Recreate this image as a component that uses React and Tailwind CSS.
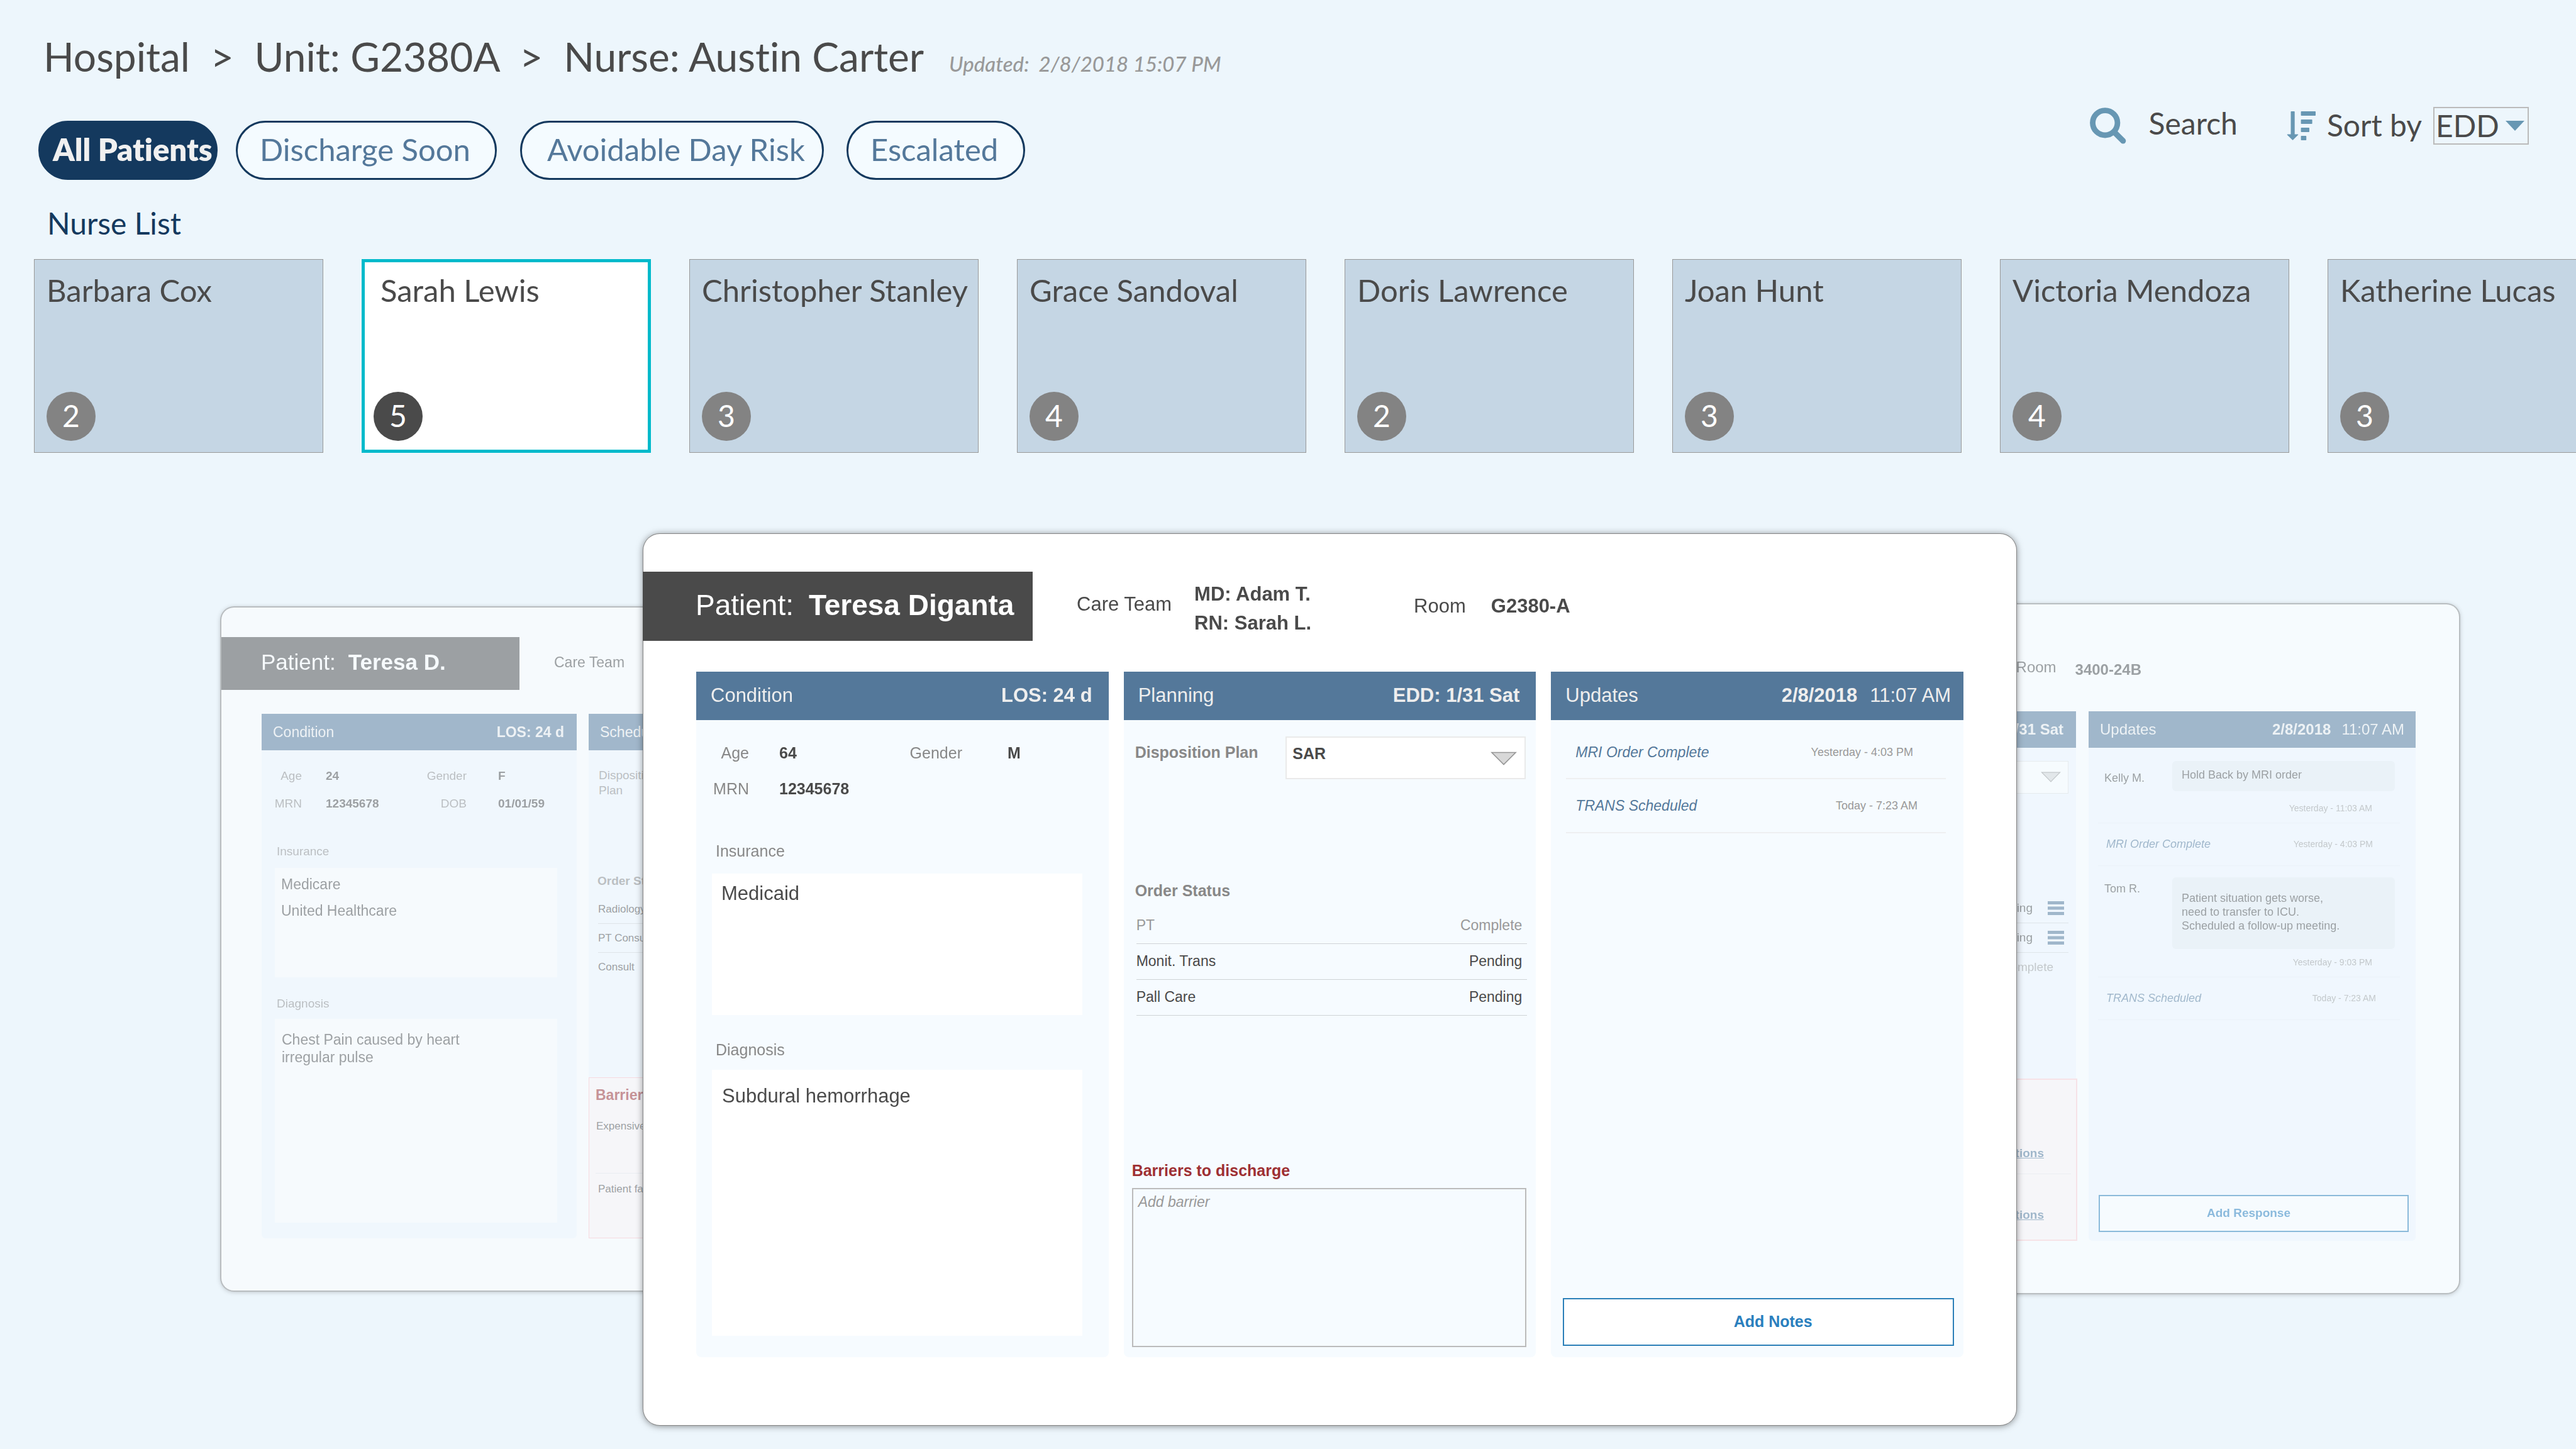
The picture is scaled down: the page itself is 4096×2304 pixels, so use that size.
import React from "react";

const filters = [
  { label: "All Patients", className: "w-[285px] pl-[20px] bg-[#14395e] text-[#f0f0f0] font-extrabold" },
  { label: "Discharge Soon", className: "ml-[29px] w-[415px] pl-[35px] bg-[#f4fbff] text-[#54789a]" },
  { label: "Avoidable Day Risk", className: "ml-[37px] w-[483px] pl-[40px] bg-[#f4fbff] text-[#54789a]" },
  { label: "Escalated", className: "ml-[36px] w-[284px] pl-[35px] bg-[#f4fbff] text-[#54789a]" },
];

const nurses = [
  { name: "Barbara Cox", count: 2 },
  { name: "Sarah Lewis", count: 5, selected: true },
  { name: "Christopher Stanley", count: 3 },
  { name: "Grace Sandoval", count: 4 },
  { name: "Doris Lawrence", count: 2 },
  { name: "Joan Hunt", count: 3 },
  { name: "Victoria Mendoza", count: 4 },
  { name: "Katherine Lucas", count: 3 },
];

const orders = [
  { name: "PT", status: "Complete", tone: "text-[#999999]" },
  { name: "Monit. Trans", status: "Pending", tone: "text-[#4a4a4a]" },
  { name: "Pall Care", status: "Pending", tone: "text-[#4a4a4a]" },
];

function SearchIcon() {
  return (
    <svg viewBox="0 0 58 58" className="h-[58px] w-[58px]" fill="none" stroke="#6797b3" aria-hidden="true">
      <circle cx="24.2" cy="24.3" r="19.7" strokeWidth="8.8" />
      <path d="M40.5 40.7L52.8 53" strokeWidth="9" strokeLinecap="round" />
    </svg>
  );
}

function SortIcon() {
  return (
    <svg viewBox="0 0 46 46" className="h-[46px] w-[46px]" fill="#6797b3" aria-hidden="true">
      <path d="M6.5 0.8Q6.5 0 7.3 0H11.9Q12.7 0 12.7 0.8V36.5H17.6Q18.8 36.6 18.2 37.6L10.1 45.6Q9.5 46.1 9 45.6L0.8 37.6Q0.2 36.6 1.4 36.5H6.5Z" />
      <rect x="22.6" y="0" width="23.4" height="7" rx="0.8" />
      <rect x="22.6" y="13" width="18" height="7" rx="0.8" />
      <rect x="22.6" y="26" width="13.4" height="7" rx="0.8" />
      <rect x="22.6" y="39" width="8.6" height="7" rx="0.8" />
    </svg>
  );
}

function Caret({ className }) {
  return (
    <svg viewBox="0 0 42 22" className={className} preserveAspectRatio="none" aria-hidden="true">
      <path d="M2 1.5H40L21 20.5Z" fill="#d8d8d8" stroke="#979797" strokeWidth="1.6" />
    </svg>
  );
}

function MenuIcon() {
  return (
    <svg viewBox="0 0 26 22" className="h-[22px] w-[26px]" fill="#54789a" aria-hidden="true">
      <rect width="26" height="5" />
      <rect y="8.5" width="26" height="5" />
      <rect y="17" width="26" height="5" />
    </svg>
  );
}

function Header() {
  return (
    <header className="flex items-start justify-between pt-[50px] pr-[75px] pl-[61px] font-['Lato',sans-serif] [font-variant-ligatures:none]">
      <div>
        <div className="flex items-baseline gap-[40px] pl-[8px]">
          <h1 className="text-[64px] leading-[80px] whitespace-pre text-[#4a4a4a]">
            {"Hospital  >  Unit: G2380A  >  Nurse: Austin Carter"}
          </h1>
          <p className="text-[33px] font-medium whitespace-pre text-[#999999] italic">{"Updated:  2/8/2018 15:07 PM"}</p>
        </div>
        <nav className="mt-[62px] flex">
          {filters.map((f) => (
            <button
              key={f.label}
              type="button"
              className={`h-[94px] rounded-full border-[3px] border-[#14395e] pb-[5px] text-left text-[49px] leading-[60px] whitespace-nowrap ${f.className}`}
            >
              {f.label}
            </button>
          ))}
        </nav>
      </div>
      <div className="mt-[120px] flex h-[60px] items-center text-[48px] text-[#4a4a4a]">
        <button type="button" className="flex items-center gap-[36px] leading-[60px]">
          <SearchIcon />
          <span className="pb-[8px]">Search</span>
        </button>
        <span className="ml-[78px]">
          <SortIcon />
        </span>
        <label htmlFor="sort" className="ml-[18px] pb-[2px] leading-[56px]">
          Sort by
        </label>
        <div className="relative ml-[18px]">
          <select
            id="sort"
            defaultValue="EDD"
            className="block h-[60px] w-[152px] appearance-none border-2 border-[#bbbbbb] bg-transparent pb-[1px] pl-[2px] text-[48px] leading-[52px]"
          >
            <option>EDD</option>
          </select>
          <svg viewBox="0 0 30 16" className="pointer-events-none absolute top-[22px] right-[7px] h-[16px] w-[30px]" aria-hidden="true">
            <path d="M0 0H30L15 16Z" fill="#6797b3" />
          </svg>
        </div>
      </div>
    </header>
  );
}

function NurseList() {
  return (
    <section className="mt-[39px] font-['Lato',sans-serif] [font-variant-ligatures:none]">
      <h2 className="pl-[75px] text-[48px] leading-[60px] text-[#14395e]">Nurse List</h2>
      <ul className="mt-[27px] flex gap-[61px] overflow-hidden pl-[54px]">
        {nurses.map((n) => (
          <li key={n.name} className="shrink-0">
            <button
              type="button"
              className={`flex h-[308px] w-[460px] flex-col items-start justify-between text-left ${
                n.selected
                  ? "border-[5px] border-[#00bacb] bg-white pt-[14px] pb-[14px] pl-[14px]"
                  : "border border-[#999999] bg-[#c5d6e4] pt-[18px] pb-[18px] pl-[19px]"
              }`}
            >
              <span className={`text-[49px] leading-[60px] whitespace-nowrap text-[#4a4a4a] ${n.selected ? "pl-[11px]" : ""}`}>{n.name}</span>
              <span
                className={`flex h-[78px] w-[78px] items-center justify-center rounded-full pb-[2px] text-[48px] leading-[60px] text-white ${
                  n.selected ? "bg-[#4a4a4a]" : "bg-[#838383]"
                }`}
              >
                {n.count}
              </span>
            </button>
          </li>
        ))}
      </ul>
    </section>
  );
}

function MainColumn({ title, right, children }) {
  return (
    <section className="flex flex-col">
      <header className="flex h-[77px] items-center justify-between bg-[#54789a] pr-[26px] pl-[23px] text-[31px] text-[#eeeeee]">
        <h3>{title}</h3>
        {right}
      </header>
      <div className="flex flex-1 flex-col rounded-b-[8px] bg-[#f6fbff]">{children}</div>
    </section>
  );
}

function SideColumn({ title, right, size, children }) {
  return (
    <section className={`flex shrink-0 flex-col ${size}`}>
      <header className="flex h-[58px] items-center justify-between bg-[#54789a] pr-[20px] pl-[18px] text-[#eeeeee]">
        <h3>{title}</h3>
        {right}
      </header>
      <div className="flex flex-1 flex-col rounded-b-[6px] bg-[#f3f8ff]">{children}</div>
    </section>
  );
}

function MainCard() {
  return (
    <article className="z-10 col-start-2 row-start-1 m-px rounded-[26px] bg-white pt-[60px] pb-[108px] text-[#4a4a4a] shadow-[0_0_0_1px_#858585,0_1px_12px_rgba(0,0,0,0.5)]">
      <div className="flex items-center text-[31px] whitespace-nowrap">
        <h2 className="-ml-px flex h-[110px] w-[620px] items-center gap-[24px] bg-[#4a4a4a] pb-[4px] pl-[84px] text-[46px] text-white">
          <span>Patient:</span>
          <strong>Teresa Diganta</strong>
        </h2>
        <span className="ml-[70px] pb-[6px]">Care Team</span>
        <p className="ml-[36px] pt-[7px] leading-[46px] font-bold">
          MD: Adam T.
          <br />
          RN: Sarah L.
        </p>
        <span className="ml-[163px]">Room</span>
        <strong className="ml-[40px]">G2380-A</strong>
      </div>
      <div className="mt-[49px] grid grid-cols-3 gap-[24px] px-[84px]">
        <MainColumn title="Condition" right={<strong>LOS: 24 d</strong>}>
          <dl className="grid grid-cols-[84px_205px_134px_1fr] pt-[24px] text-[25px] leading-[57px]">
            <dt className="text-right text-[#888888]">Age</dt>
            <dd className="pl-[48px] font-bold">64</dd>
            <dt className="text-right text-[#888888]">Gender</dt>
            <dd className="pl-[72px] font-bold">M</dd>
            <dt className="text-right text-[#888888]">MRN</dt>
            <dd className="pl-[48px] font-bold">12345678</dd>
          </dl>
          <label htmlFor="insurance" className="mt-[50px] pl-[31px] text-[25px] leading-[40px] text-[#888888]">
            Insurance
          </label>
          <div className="mt-[16px] pr-[42px] pl-[25px]">
            <textarea id="insurance" defaultValue="Medicaid" className="block h-[225px] w-full resize-none bg-white px-[15px] pt-[14px] text-[31px] leading-[36px]" />
          </div>
          <label htmlFor="diagnosis" className="mt-[35px] pl-[31px] text-[25px] leading-[40px] text-[#888888]">
            Diagnosis
          </label>
          <div className="mt-[12px] pr-[42px] pb-[34px] pl-[25px]">
            <textarea id="diagnosis" defaultValue="Subdural hemorrhage" className="block h-[423px] w-full resize-none bg-white px-[16px] pt-[24px] text-[31px] leading-[36px]" />
          </div>
        </MainColumn>

        <MainColumn title="Planning" right={<strong>EDD: 1/31 Sat</strong>}>
          <div className="mt-[26px] flex items-start justify-between pr-[16px] pl-[18px]">
            <label htmlFor="plan" className="text-[25px] leading-[50px] font-bold text-[#888888]">
              Disposition Plan
            </label>
            <div className="relative">
              <select
                id="plan"
                defaultValue="SAR"
                className="block h-[68px] w-[382px] appearance-none border-2 border-[#eaeaea] bg-white pb-[12px] pl-[9px] text-[25px] font-bold"
              >
                <option>SAR</option>
              </select>
              <Caret className="pointer-events-none absolute top-[24px] right-[14px] h-[22px] w-[42px]" />
            </div>
          </div>
          <h4 className="mt-[157px] pl-[18px] text-[25px] leading-[40px] font-bold text-[#888888]">Order Status</h4>
          <div className="mt-[7px] pr-[14px] pl-[20px]">
            <table className="w-full text-[23px]">
              <tbody>
                {orders.map((o) => (
                  <tr key={o.name} className={`h-[57px] border-b border-[#cfd3d6] ${o.tone}`}>
                    <td className="p-0">{o.name}</td>
                    <td className="p-0 pr-[8px] text-right">{o.status}</td>
                  </tr>
                ))}
              </tbody>
            </table>
          </div>
          <label htmlFor="barriers" className="mt-auto pl-[13px] text-[25px] leading-[40px] font-bold text-[#9e3033]">
            Barriers to discharge
          </label>
          <div className="mt-[8px] pr-[15px] pb-[16px] pl-[13px]">
            <textarea
              id="barriers"
              placeholder="Add barrier"
              className="block h-[253px] w-full resize-none border-2 border-[#bbbbbb] bg-transparent px-[8px] pt-[4px] text-[23px] leading-[32px] placeholder:text-[#999999] placeholder:italic"
            />
          </div>
        </MainColumn>

        <MainColumn
          title="Updates"
          right={
            <p className="-mr-[6px] flex gap-[20px]">
              <strong>2/8/2018</strong>
              <span>11:07 AM</span>
            </p>
          }
        >
          <ul className="mt-[8px] mr-[28px] ml-[24px]">
            <li className="flex h-[86px] items-center justify-between border-b-2 border-[#eeeff1] pt-[2px] pr-[52px] pl-[15px]">
              <em className="text-[23px] text-[#54789a]">MRI Order Complete</em>
              <time className="text-[18px] text-[#999999]">Yesterday - 4:03 PM</time>
            </li>
            <li className="flex h-[86px] items-center justify-between border-b-2 border-[#eeeff1] pr-[45px] pl-[15px]">
              <em className="text-[23px] text-[#54789a]">TRANS Scheduled</em>
              <time className="text-[18px] text-[#999999]">Today - 7:23 AM</time>
            </li>
          </ul>
          <div className="mt-auto pr-[15px] pb-[18px] pl-[19px]">
            <button type="button" className="h-[76px] w-full border-2 border-[#2a7fb8] bg-white pl-[46px] text-[25px] font-bold text-[#2a7fbe]">
              Add Notes
            </button>
          </div>
        </MainColumn>
      </div>
    </article>
  );
}

function LeftCard() {
  return (
    <article className="col-span-2 col-start-1 row-start-1 mt-[118px] mr-[800px] self-start overflow-hidden rounded-[20px] bg-white pt-[47px] pb-[83px] text-[#4a4a4a] opacity-50 shadow-[0_0_0_2px_#858585,0_1px_9px_rgba(0,0,0,0.6)]">
      <div className="flex items-center text-[23px] whitespace-nowrap">
        <h2 className="flex h-[84px] w-[474px] items-center gap-[20px] bg-[#4a4a4a] pb-[4px] pl-[63px] text-[35px] text-white">
          <span>Patient:</span>
          <strong>Teresa D.</strong>
        </h2>
        <span className="ml-[55px] pb-[4px]">Care Team</span>
      </div>
      <div className="mt-[38px] flex gap-[19px] pl-[64px] text-[23px]">
        <SideColumn title="Condition" right={<strong>LOS: 24 d</strong>} size="w-[501px]">
          <dl className="grid grid-cols-[64px_132px_130px_1fr] pt-[19px] text-[19px] leading-[44px]">
            <dt className="text-right text-[#888888]">Age</dt>
            <dd className="pl-[38px] font-bold">24</dd>
            <dt className="text-right text-[#888888]">Gender</dt>
            <dd className="pl-[50px] font-bold">F</dd>
            <dt className="text-right text-[#888888]">MRN</dt>
            <dd className="pl-[38px] font-bold">12345678</dd>
            <dt className="text-right text-[#888888]">DOB</dt>
            <dd className="pl-[50px] font-bold">01/01/59</dd>
          </dl>
          <label htmlFor="insurance-left" className="mt-[39px] pl-[24px] text-[19px] leading-[30px] text-[#888888]">
            Insurance
          </label>
          <div className="mt-[11px] pr-[31px] pl-[21px]">
            <textarea id="insurance-left" defaultValue={"Medicare\nUnited Healthcare"} className="block h-[174px] w-full resize-none bg-white px-[10px] pt-[5px] text-[23px] leading-[42px]" />
          </div>
          <label htmlFor="diagnosis-left" className="mt-[27px] pl-[24px] text-[19px] leading-[30px] text-[#888888]">
            Diagnosis
          </label>
          <div className="mt-[9px] pr-[31px] pb-[25px] pl-[21px]">
            <textarea
              id="diagnosis-left"
              defaultValue={"Chest Pain caused by heart\nirregular pulse"}
              className="block h-[324px] w-full resize-none bg-white px-[11px] pt-[19px] text-[23px] leading-[28px]"
            />
          </div>
        </SideColumn>
        <SideColumn title="Scheduling" size="w-[501px]">
          <p className="mt-[28px] w-[120px] pl-[16px] text-[19px] leading-[24px] text-[#888888]">Disposition Plan</p>
          <h4 className="mt-[117px] pl-[14px] text-[19px] leading-[30px] font-bold text-[#888888]">Order Status</h4>
          <ul className="mt-[7px] ml-[15px] text-[17px] leading-[45px]">
            <li className="border-b border-[#cfd3d6]">Radiology</li>
            <li className="border-b border-[#cfd3d6]">PT Consult</li>
            <li>Consult</li>
          </ul>
          <div className="mt-auto h-[256px] border border-[#ffbfc5] bg-[#fff6f6] pt-[11px] pl-[10px]">
            <h4 className="text-[23px] leading-[32px] font-bold text-[#9e3033]">Barriers</h4>
            <p className="mt-[19px] h-[90px] border-b border-[#e4e4e8] pl-[1px] text-[17px] leading-[30px]">Expensive</p>
            <p className="mt-[10px] pl-[4px] text-[17px] leading-[30px]">Patient family</p>
          </div>
        </SideColumn>
      </div>
    </article>
  );
}

function Message({ author, time, tall, children }) {
  return (
    <li className="border-b border-[#e9eef5] pr-[8px] pl-[10px]">
      <div className={`flex items-start justify-between ${tall ? "h-[132px] pt-[18px]" : "h-[69px] pt-[21px]"}`}>
        <span className={tall ? "leading-[36px]" : "leading-[54px]"}>{author}</span>
        <p className={`w-[354px] rounded-[6px] bg-[#e7edf4] px-[15px] leading-[22px] ${tall ? "h-[114px] pt-[22px]" : "h-[48px] pt-[11px]"}`}>{children}</p>
      </div>
      <time className={`block pr-[36px] pb-[13px] text-right text-[14px] leading-[20px] text-[#999999] ${tall ? "pt-[11px]" : "pt-[17px]"}`}>{time}</time>
    </li>
  );
}

function RightCard() {
  return (
    <article className="col-span-2 col-start-2 row-start-1 mt-[113px] ml-[800px] self-start overflow-hidden rounded-[20px] bg-white pt-[60px] pb-[83px] text-[#4a4a4a] opacity-50 shadow-[0_0_0_2px_#858585,0_1px_9px_rgba(0,0,0,0.6)]">
      <div className="flex h-[84px] items-center justify-end gap-[30px] pr-[505px] text-[24px]">
        <span className="pb-[4px]">Room</span>
        <strong className="pt-[4px]">3400-24B</strong>
      </div>
      <div className="mt-[26px] flex min-h-[842px] justify-end gap-[20px] pr-[69px] text-[24px]">
        <SideColumn title="Planning" right={<strong>EDD: 1/31 Sat</strong>} size="w-[520px]">
          <div className="relative mt-[21px] mr-[12px] self-end">
            <select aria-label="Disposition plan" className="block h-[52px] w-[300px] appearance-none border border-[#e0e0e0] bg-white" />
            <Caret className="pointer-events-none absolute top-[17px] right-[12px] h-[17px] w-[32px]" />
          </div>
          <ul className="mt-[159px] mr-[12px] text-[19px] leading-[46px]">
            <li className="flex items-center justify-end gap-[24px] border-b border-[#cfd3d6] pr-[7px]">
              Pending <MenuIcon />
            </li>
            <li className="flex items-center justify-end gap-[24px] border-b border-[#cfd3d6] pr-[7px]">
              Pending <MenuIcon />
            </li>
            <li className="pr-[24px] text-right text-[#999999]">Complete</li>
          </ul>
          <div className="-mr-[2px] mt-auto h-[258px] border-2 border-[#ffcdd2] bg-[#fff6f6] text-right text-[19px] font-bold text-[#54789a]">
            <p className="mr-[8px] h-[150px] border-b border-[#e9e4e8] pt-[102px] pr-[43px] leading-[30px]">
              <a href="#options-1" className="underline">Options</a>
            </p>
            <p className="mr-[8px] pt-[50px] pr-[43px] leading-[30px]">
              <a href="#options-2" className="underline">Options</a>
            </p>
          </div>
        </SideColumn>
        <SideColumn
          title="Updates"
          size="w-[520px]"
          right={
            <p className="-mr-[2px] flex gap-[17px]">
              <strong>2/8/2018</strong>
              <span>11:07 AM</span>
            </p>
          }
        >
          <ul className="mr-[25px] ml-[15px] text-[18px]">
            <Message author="Kelly M." time="Yesterday - 11:03 AM">
              Hold Back by MRI order
            </Message>
            <li className="flex h-[68px] items-center justify-between border-b border-[#e9eef5] pr-[43px] pl-[13px]">
              <em className="text-[#54789a]">MRI Order Complete</em>
              <time className="text-[14px] text-[#999999]">Yesterday - 4:03 PM</time>
            </li>
            <Message author="Tom R." time="Yesterday - 9:03 PM" tall>
              Patient situation gets worse,
              <br />
              need to transfer to ICU.
              <br />
              Scheduled a follow-up meeting.
            </Message>
            <li className="flex h-[68px] items-center justify-between border-b border-[#e9eef5] pr-[38px] pl-[13px]">
              <em className="text-[#54789a]">TRANS Scheduled</em>
              <time className="text-[14px] text-[#999999]">Today - 7:23 AM</time>
            </li>
          </ul>
          <div className="mt-auto pr-[11px] pb-[14px] pl-[16px]">
            <button type="button" className="h-[59px] w-full border-2 border-[#2a7fb8] bg-white pr-[16px] text-[19px] font-bold text-[#2a7fbe]">
              Add Response
            </button>
          </div>
        </SideColumn>
      </div>
    </article>
  );
}

export default function App() {
  return (
    <main className="min-h-screen overflow-hidden bg-[#edf6fc]">
      <Header />
      <NurseList />
      <section className="mt-[128px] grid grid-cols-[670fr_2185fr_703fr] items-start pr-[186px] pl-[352px] font-['Liberation_Sans',Arial,sans-serif]">
        <LeftCard />
        <RightCard />
        <MainCard />
      </section>
    </main>
  );
}
